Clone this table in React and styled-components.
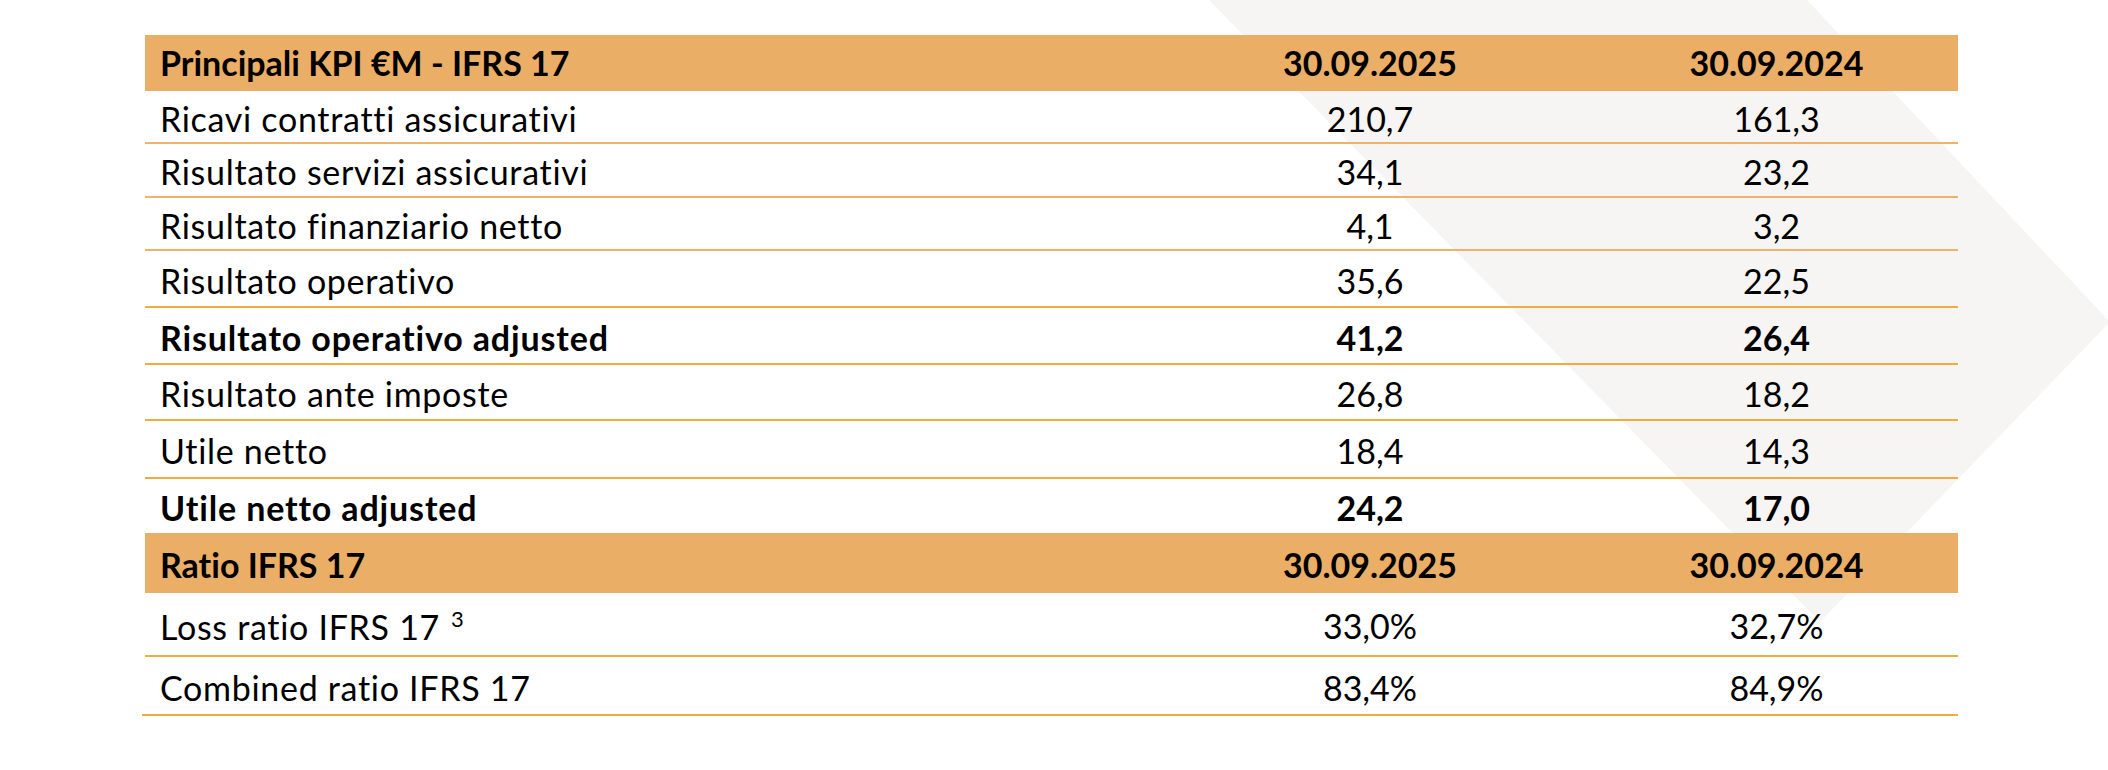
import React from 'react';
import styled, { createGlobalStyle } from 'styled-components';

const kpiRows = [
	{ label: 'Ricavi contratti assicurativi', a: '210,7', b: '161,3', h: 53, soft: true },
	{ label: 'Risultato servizi assicurativi', a: '34,1', b: '23,2', h: 54, soft: true },
	{ label: 'Risultato finanziario netto', a: '4,1', b: '3,2', h: 53, soft: true },
	{ label: 'Risultato operativo', a: '35,6', b: '22,5', h: 57 },
	{ label: 'Risultato operativo adjusted', a: '41,2', b: '26,4', h: 57, bold: true },
	{ label: 'Risultato ante imposte', a: '26,8', b: '18,2', h: 56 },
	{ label: 'Utile netto', a: '18,4', b: '14,3', h: 58 },
	{ label: 'Utile netto adjusted', a: '24,2', b: '17,0', h: 54, bold: true, noLine: true },
];

const ratioRows = [
	{ label: 'Loss ratio IFRS 17', note: '3', a: '33,0%', b: '32,7%', h: 64 },
	{ label: 'Combined ratio IFRS 17', a: '83,4%', b: '84,9%', h: 59, wide: true },
];

function Row({ row }) {
	return (
		<BodyRow $h={row.h} $bold={row.bold} $soft={row.soft} $noLine={row.noLine} $wide={row.wide}>
			<Label $spacing={row.bold ? 0.85 : 0.7}>
				{row.label}
				{row.note && <Sup>{row.note}</Sup>}
			</Label>
			<Value>{row.a}</Value>
			<Value>{row.b}</Value>
		</BodyRow>
	);
}

function App() {
	return (
		<Page>
			<GlobalStyle />
			<Backdrop width="2108" height="770" viewBox="0 0 2108 770" aria-hidden="true">
				<polygon points="1209,0 1807,0 2110,322 1820,622" fill="#f6f5f3" />
			</Backdrop>
			<Table>
				<HeadRow $h={56}>
					<Label>Principali KPI €M - IFRS 17</Label>
					<Value>30.09.2025</Value>
					<Value>30.09.2024</Value>
				</HeadRow>
				{kpiRows.map((row) => (
					<Row key={row.label} row={row} />
				))}
				<HeadRow $h={60} $drop={4}>
					<Label>Ratio IFRS 17</Label>
					<Value>30.09.2025</Value>
					<Value>30.09.2024</Value>
				</HeadRow>
				{ratioRows.map((row) => (
					<Row key={row.label} row={row} />
				))}
			</Table>
		</Page>
	);
}

export default App;

const GlobalStyle = createGlobalStyle`
  html, body {
    margin: 0;
    background: #ffffff;
  }
  body {
    font-family: Lato, "Liberation Sans", sans-serif;
    color: #000000;
    font-variant-ligatures: none;
  }
`;

const Page = styled.div`
  position: relative;
  width: 2108px;
  height: 770px;
  overflow: hidden;
  padding: 35px 0 0 145px;
  box-sizing: border-box;
`;

const Backdrop = styled.svg`
  position: absolute;
  left: 0;
  top: 0;
  z-index: 0;
`;

const Table = styled.div`
  position: relative;
  z-index: 1;
  width: 1813px;
  display: flex;
  flex-direction: column;
`;

const RowBase = styled.div`
  display: grid;
  grid-template-columns: 1000px 450px 363px;
  align-items: center;
  height: ${(p) => p.$h}px;
  box-sizing: border-box;
  font-size: 34px;
  line-height: 1;
`;

const HeadRow = styled(RowBase)`
  background: #eaae66;
  font-weight: 700;
  padding-top: ${(p) => p.$drop || 0}px;
`;

const BodyRow = styled(RowBase)`
  font-weight: ${(p) => (p.$bold ? 700 : 400)};
  padding-top: 4px;
  margin-left: ${(p) => (p.$wide ? -3 : 0)}px;
  padding-left: ${(p) => (p.$wide ? 3 : 0)}px;
  border-bottom: ${(p) =>
		p.$noLine ? 'none' : `2px solid ${p.$soft ? '#efb26b' : '#f1ac40'}`};
`;

const Label = styled.div`
  padding-left: 15px;
  white-space: nowrap;
  letter-spacing: ${(p) => (p.$spacing ? `${p.$spacing}px` : 'normal')};
`;

const Value = styled.div`
  text-align: center;
  white-space: nowrap;
`;

const Sup = styled.span`
  font-size: 22px;
  letter-spacing: normal;
  vertical-align: 13px;
  margin-left: 11px;
`;
